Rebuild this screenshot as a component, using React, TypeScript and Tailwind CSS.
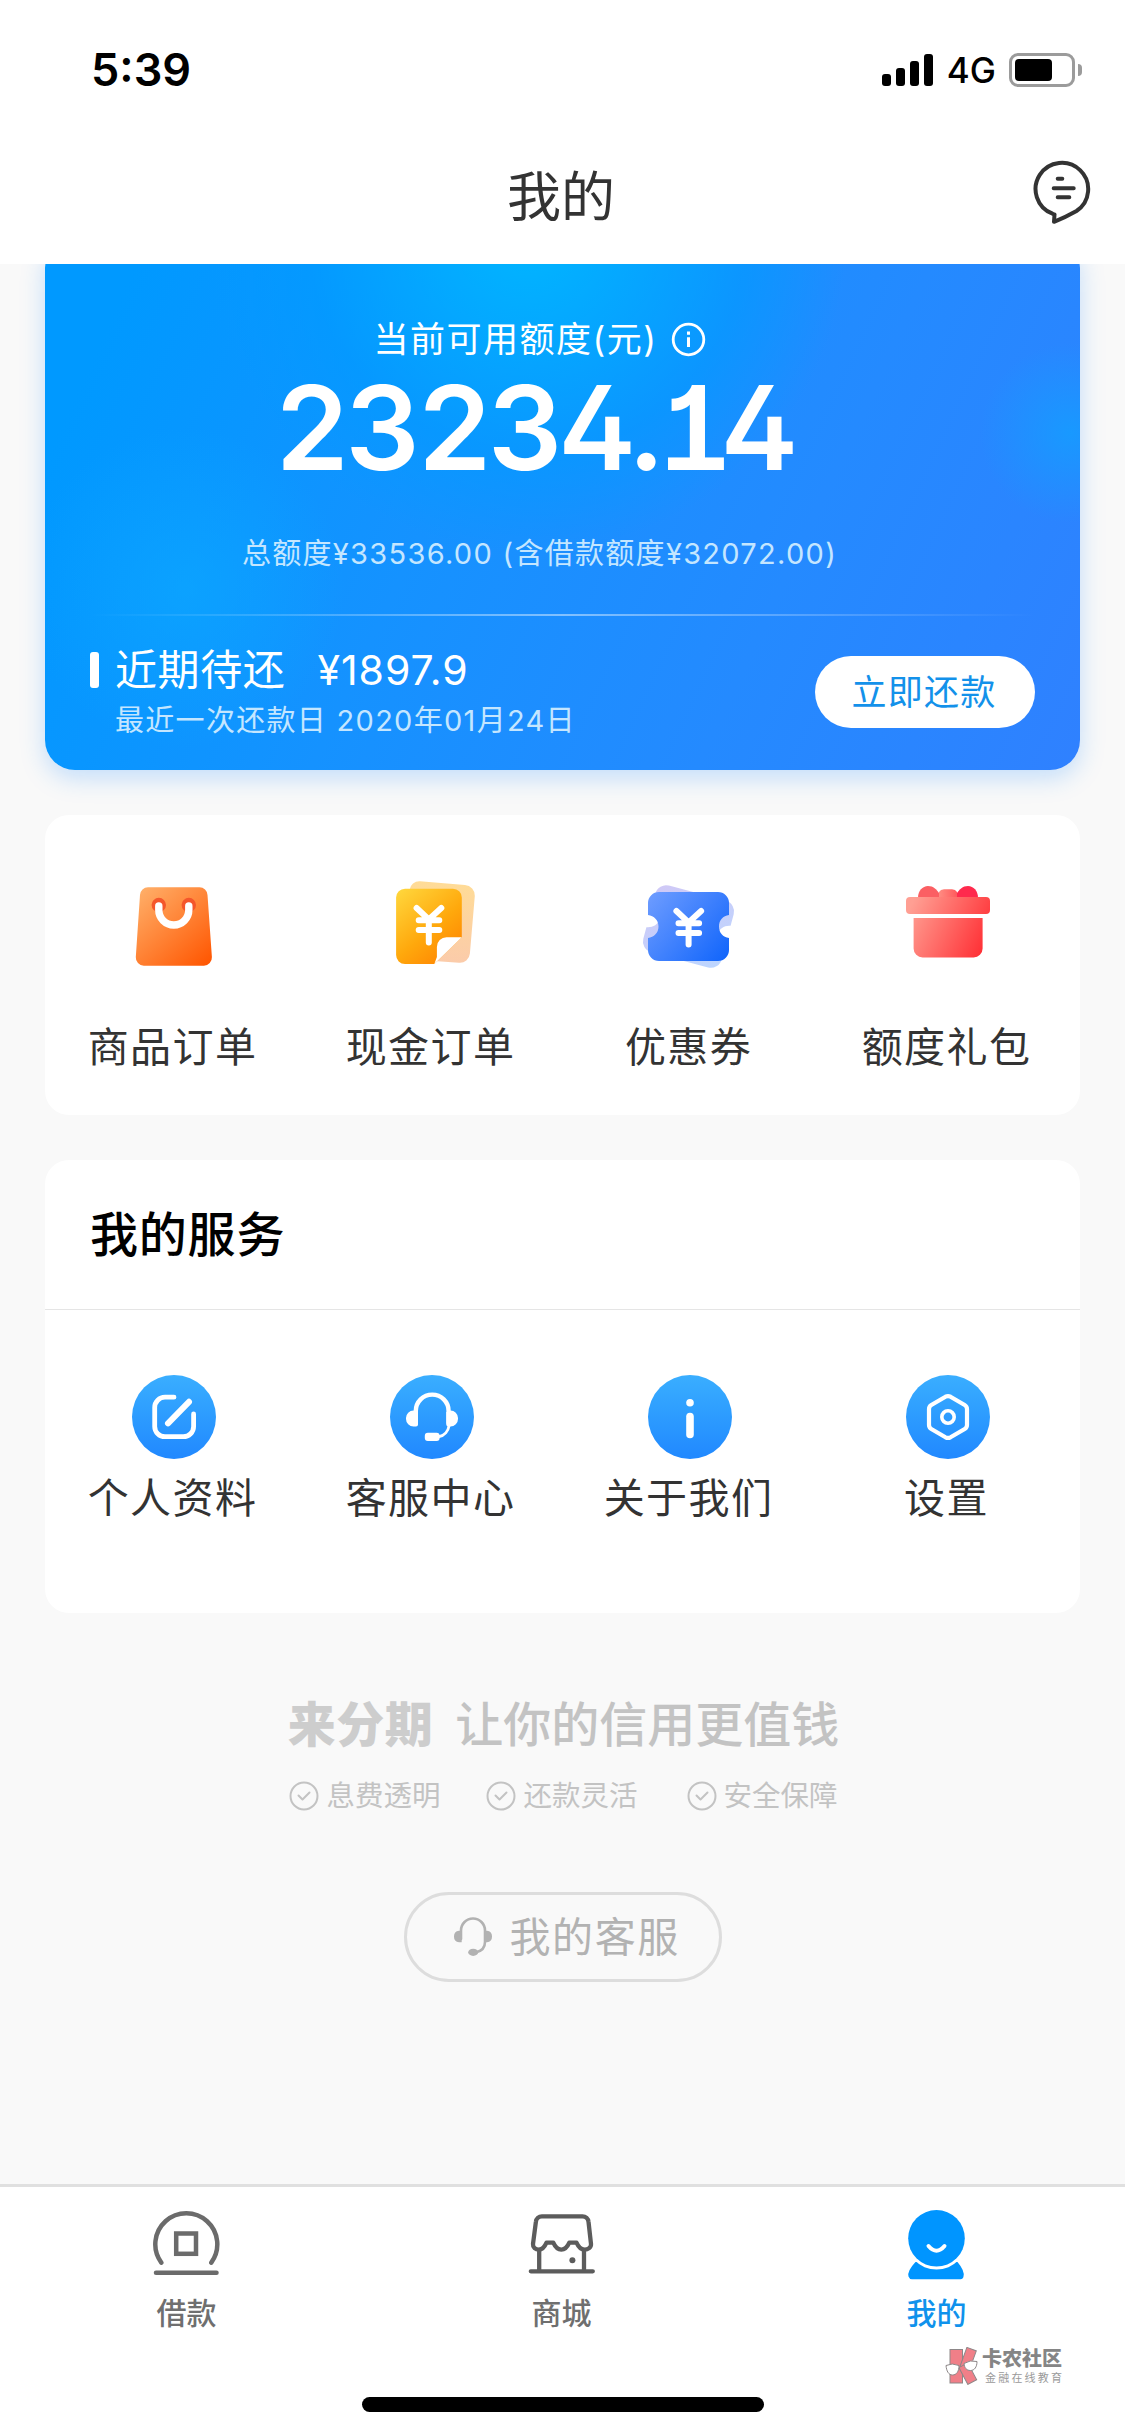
import type { ReactNode } from "react";

const FONT = "font-['Inter','Noto_Sans_CJK_SC',sans-serif]";

function StatusBar() {
	return (
		<div className="flex h-[139px] items-center justify-between pl-[91px] pr-[43px]">
			<span className="text-[45px] font-semibold leading-none text-black">5:39</span>
			<div className="flex items-center">
				<div className="flex items-end gap-[5px]">
					<span className="h-3 w-[9px] rounded-[3px] bg-black" />
					<span className="h-[18px] w-[9px] rounded-[3px] bg-black" />
					<span className="h-[25px] w-[9px] rounded-[3px] bg-black" />
					<span className="h-8 w-[9px] rounded-[3px] bg-black" />
				</div>
				<span className="ml-[14px] mt-0.5 text-[35px] font-medium leading-none text-black">4G</span>
				<div className="ml-[13px] flex h-[34px] w-[66px] items-center rounded-[9px] border-3 border-[#9b9b9b] pl-[3px]">
					<span className="h-[22px] w-[37px] rounded-[4px] bg-black" />
				</div>
				<span className="ml-[3px] h-3 w-1 rounded-r-full bg-[#9b9b9b]" />
			</div>
		</div>
	);
}

function ChatIcon() {
	return (
		<svg width="60" height="66" viewBox="0 0 60 66" fill="none" stroke="#333" strokeWidth="4" strokeLinecap="round" strokeLinejoin="round">
			<path d="M22.5 54.6 L22 61.8 Q34 57 44.5 51 A26.3 26.3 0 1 0 20.5 53.7 L22.5 54.6" />
			<path d="M25.7 18.7h4.6M21.7 28.3h20M25.7 37.3h11.6" />
		</svg>
	);
}

function QuotaCard() {
	return (
		<section className="relative mx-[45px] -mt-[26px] h-[532px] rounded-[30px] bg-[radial-gradient(circle_at_483px_-5px,#00b6ff_0px,rgba(0,170,255,0.75)_130px,rgba(0,155,255,0.6)_220px,rgba(0,155,255,0)_320px),radial-gradient(circle_at_140px_350px,rgba(12,170,255,0.6)_0px,rgba(12,170,255,0)_160px),radial-gradient(circle_at_1025px_195px,rgba(20,158,255,0.8)_0px,rgba(20,158,255,0)_90px),linear-gradient(115deg,#0099ff_8%,#1592ff_40%,#248aff_70%,#3080ff_102%)] text-white shadow-[0_8px_24px_rgba(30,140,255,0.25)]">
			<div className="flex flex-col items-center pr-[46px] pt-[76px]">
				<div className="flex h-[50px] items-center">
					<span className="text-[35px] leading-none tracking-[1.5px]">当前可用额度(元)</span>
					<svg className="ml-[13px]" width="35" height="35" viewBox="0 0 35 35" fill="none" stroke="#fff" strokeWidth="2.8">
						<circle cx="17.5" cy="17.5" r="15.3" />
						<path d="M17.5 15.3V25M17.5 9.5v3.2" strokeWidth="3" />
					</svg>
				</div>
				<div className="mr-[18px] mt-[6px] text-[117px] font-semibold leading-[116px] [font-feature-settings:'cv01','cv02','tnum']">
					<span className="tracking-[-4.5px]">23234</span>
					<span className="tracking-[-5px]">.</span>
					<span className="tracking-[-11px]">14</span>
				</div>
				<div className="mt-[48px] text-[29px] leading-10 tracking-[1.3px] text-[#c4e6ff]">
					总额度¥33536.00 (含借款额度¥32072.00)
				</div>
			</div>
			<div className="mx-[45px] mt-[40px] h-[2px] bg-linear-to-r from-white/0 via-white/45 to-white/0" />
			<div className="flex items-start justify-between px-[45px] pt-6">
				<div>
					<div className="flex h-[60px] items-center">
						<span className="h-9 w-[9px] rounded-[3px] bg-white" />
						<span className="ml-4 text-[42px] leading-none tracking-[0.6px]">近期待还</span>
						<span className="ml-8 text-[41px] leading-none tracking-[1px]">¥1897.9</span>
					</div>
					<div className="mt-1 pl-[25px] text-[29px] leading-[34px] tracking-[1.3px] text-[#c4e6ff]">
						最近一次还款日 2020年01月24日
					</div>
				</div>
				<button className="mt-4 h-[72px] w-[220px] rounded-full bg-white pr-[2px] text-[35px] leading-[70px] tracking-[1.2px] text-[#1391ea]">
					立即还款
				</button>
			</div>
		</section>
	);
}

function BagIcon() {
	return (
		<svg width="90" height="90" viewBox="0 0 90 90" fill="none">
			<defs>
				<linearGradient id="bag" x1="10" y1="8" x2="80" y2="86" gradientUnits="userSpaceOnUse">
					<stop stopColor="#ffb06a" />
					<stop offset="1" stopColor="#ff5500" />
				</linearGradient>
			</defs>
			<path d="M19 7.3H70.5a8 8 0 0 1 8 7.6L82.9 77a8.2 8.2 0 0 1-8 8.7H14.8a8.2 8.2 0 0 1-8-8.7L11 14.9a8 8 0 0 1 8-7.6z" fill="url(#bag)" />
			<circle cx="29.8" cy="25" r="7.2" fill="#f4562b" />
			<circle cx="59.8" cy="25" r="7.2" fill="#f4562b" />
			<path d="M29.8 26v4a15 15 0 0 0 30 0v-4" stroke="#fff" strokeWidth="7.4" strokeLinecap="round" />
		</svg>
	);
}

function CashIcon() {
	return (
		<svg width="90" height="90" viewBox="0 0 90 90" fill="none">
			<defs>
				<linearGradient id="cash" x1="9" y1="9" x2="72" y2="84" gradientUnits="userSpaceOnUse">
					<stop stopColor="#ffd83e" />
					<stop offset="0.55" stopColor="#ffa80c" />
					<stop offset="1" stopColor="#ff7e00" />
				</linearGradient>
				<linearGradient id="cashBack" x1="60" y1="0" x2="60" y2="84" gradientUnits="userSpaceOnUse">
					<stop stopColor="#ffdc96" />
					<stop offset="1" stopColor="#fbcbaa" />
				</linearGradient>
			</defs>
			<path d="M33 1.2 78 5a10.5 10.5 0 0 1 9.8 11L82.9 73.5a10 10 0 0 1-11 9.2L40 80.5 22.5 10a10 10 0 0 1 10.5-8.8z" fill="url(#cashBack)" />
			<path d="M18 8.7H66a8.8 8.8 0 0 1 8.8 8.8V57.3L47.3 84H18a8.9 8.9 0 0 1-8.9-8.9V17.6A8.9 8.9 0 0 1 18 8.7z" fill="url(#cash)" />
			<path d="M74.8 57.3H59.5a9.6 9.6 0 0 0-9.6 9.6V77L47.3 84z" fill="#fff" />
			<path d="m29.6 28 12.2 11.5L54.3 28M31.7 40.3h20.6M31.7 50h20.6M41.8 40v22.5" stroke="#fff" strokeWidth="6" strokeLinecap="round" />
		</svg>
	);
}

const TICKET =
	"M14 12H73a11 11 0 0 1 11 11V35C78 36 74 40 74 46.5S78 57 84 58V70a11 11 0 0 1-11 11H14A11 11 0 0 1 3 70V58C9 57 13.5 53 13.5 46.5S9 36 3 35V23A11 11 0 0 1 14 12z";

function CouponIcon() {
	return (
		<svg width="90" height="90" viewBox="0 0 90 90" fill="none" overflow="visible">
			<defs>
				<linearGradient id="coupon" x1="3" y1="12" x2="84" y2="81" gradientUnits="userSpaceOnUse">
					<stop stopColor="#6f9dff" />
					<stop offset="1" stopColor="#0f64fb" />
				</linearGradient>
				<linearGradient id="couponBack" x1="10" y1="5" x2="80" y2="85" gradientUnits="userSpaceOnUse">
					<stop stopColor="#d0c8f6" />
					<stop offset="1" stopColor="#bcd6ff" />
				</linearGradient>
			</defs>
			<path d={TICKET} fill="url(#couponBack)" transform="rotate(15 43.5 46.5)" />
			<path d={TICKET} fill="url(#coupon)" />
			<path d="M31.4 31 43.6 42.5 56.1 31M33.5 43.3h20.6M33.5 53h20.6M43.6 43v21.5" stroke="#fff" strokeWidth="6" strokeLinecap="round" />
		</svg>
	);
}

function GiftIcon() {
	return (
		<svg width="90" height="90" viewBox="0 0 90 90" fill="none">
			<defs>
				<linearGradient id="gift" x1="6" y1="30" x2="82" y2="66" gradientUnits="userSpaceOnUse">
					<stop stopColor="#ff9f93" />
					<stop offset="1" stopColor="#ff3136" />
				</linearGradient>
				<linearGradient id="giftKnot" x1="36" y1="0" x2="54" y2="0" gradientUnits="userSpaceOnUse">
					<stop stopColor="#ff8c82" />
					<stop offset="1" stopColor="#ff5a5c" />
				</linearGradient>
			</defs>
			<path d="M15 17.5C15 11 19.5 6 25 6s8.5 3.5 11 7v5z" fill="#fb5f63" />
			<path d="M75 17.5C75 11 70.5 6 65 6s-8.5 3.5-11 7v5z" fill="#ff2a4d" />
			<path d="M36 18v-6q1.5-2.7 5-2.7h8q3.5 0 5 2.7v6z" fill="url(#giftKnot)" />
			<rect x="3" y="17" width="84" height="17" rx="4" fill="url(#gift)" />
			<path d="M10.6 38h69v30.5a9 9 0 0 1-9 9h-51a9 9 0 0 1-9-9z" fill="url(#gift)" />
		</svg>
	);
}

function Disc({ children }: { children: ReactNode }) {
	return (
		<div className="flex h-[84px] w-[84px] items-center justify-center rounded-full bg-linear-to-b from-[#3aaeff] to-[#2188ff]">
			<svg width="84" height="84" viewBox="0 0 84 84" fill="none" stroke="#fff" strokeLinecap="round" strokeLinejoin="round">
				{children}
			</svg>
		</div>
	);
}

const orders = [
	{ label: "商品订单", icon: <BagIcon /> },
	{ label: "现金订单", icon: <CashIcon /> },
	{ label: "优惠券", icon: <CouponIcon /> },
	{ label: "额度礼包", icon: <GiftIcon /> },
];

const services = [
	{
		label: "个人资料",
		icon: (
			<>
				<path d="M42 22.2H33a10.3 10.3 0 0 0-10.3 10.3V51.4A10.3 10.3 0 0 0 33 61.7h18.3a10.3 10.3 0 0 0 10.3-10.3V39" strokeWidth="4.8" />
				<path d="M36 48.3 57 26.8" strokeWidth="6" />
			</>
		),
	},
	{
		label: "客服中心",
		icon: (
			<>
				<path d="M25.8 48V36a16.4 16.4 0 0 1 32.8 0V48" strokeWidth="4.4" />
				<path d="M28 37v12.5a2 2 0 0 1-2 2h-2.5a7.5 7.5 0 0 1-7.5-7.5v-1a7.5 7.5 0 0 1 7.5-7.5zM56.3 37v12.5a2 2 0 0 0 2 2h2.2A7.5 7.5 0 0 0 68 44v-1a7.5 7.5 0 0 0-7.5-7.5z" fill="#fff" stroke="none" />
				<path d="M59 51c-.8 5-4.5 9.5-10 10.7" strokeWidth="2.8" />
				<rect x="34.8" y="57.7" width="14.8" height="8.4" rx="3" fill="#fff" stroke="none" />
			</>
		),
	},
	{
		label: "关于我们",
		icon: (
			<>
				<circle cx="42" cy="27.7" r="3.8" fill="#fff" stroke="none" />
				<path d="M42 41.5v18" strokeWidth="7.6" />
			</>
		),
	},
	{
		label: "设置",
		icon: (
			<>
				<path d="M39.5 21.7q2.5-1.3 5 0L58.7 30q2.3 1.4 2.3 4v16q0 2.6-2.3 4L44.5 62.3q-2.5 1.3-5 0L25.3 54Q23 52.6 23 50V34q0-2.6 2.3-4z" strokeWidth="4.2" />
				<circle cx="42" cy="42" r="6.2" strokeWidth="3.6" />
			</>
		),
	},
];

const promises = [
	{ label: "息费透明", gap: "" },
	{ label: "还款灵活", gap: "ml-[46px]" },
	{ label: "安全保障", gap: "ml-[49px]" },
];

function LoanIcon() {
	return (
		<svg width="70" height="72" viewBox="0 0 70 72" fill="none" stroke="#6b6b6b" strokeWidth="4.5" strokeLinecap="round">
			<path d="M9.3 53.6A31 31 0 1 1 59.3 53.6" />
			<rect x="24.2" y="24.5" width="19.8" height="20.3" />
			<path d="M4 63.7h60.5" />
		</svg>
	);
}

function MallIcon() {
	return (
		<svg width="70" height="72" viewBox="0 0 70 72" fill="none" stroke="#5c5c5c" strokeWidth="4.3" strokeLinecap="round" strokeLinejoin="round">
			<path d="M15 7.3H55.5a6 6 0 0 1 6 5.5L64 35c.3 3.5-3 5.7-6.5 5.7-4 0-6-2.5-8-7h-7.2c-2 4.5-4 7-8 7s-6-2.5-8-7h-6.8c-2 4.5-4 7-7.5 7C8.500 40.700 5.700 38.500 6 35L8.900 12.800A6 6 0 0 1 15 7.300z" />
			<path d="M12.2 41v21M57 41v21M3.8 62.3h62" />
			<circle cx="45.4" cy="51.3" r="3" fill="#5c5c5c" stroke="none" />
		</svg>
	);
}

function MineIcon() {
	return (
		<svg width="70" height="72" viewBox="0 0 70 72" fill="none">
			<path d="M13.5 53 Q5 62 6.5 67.5 Q7.5 70.3 10 70.3H58.5Q61 70.3 61.5 67.5 Q63 62 55.5 53z" fill="#0095ff" />
			<circle cx="34.5" cy="29.3" r="31.2" fill="#fff" />
			<circle cx="34.5" cy="29.3" r="28.3" fill="#0095ff" />
			<path d="M26.5 37q8 9.5 16 0" stroke="#fff" strokeWidth="4" strokeLinecap="round" />
		</svg>
	);
}

const tabs = [
	{ label: "借款", icon: <LoanIcon />, color: "text-[#6f6f6f]" },
	{ label: "商城", icon: <MallIcon />, color: "text-[#6f6f6f]" },
	{ label: "我的", icon: <MineIcon />, color: "text-[#0f92ec]" },
];

export default function App() {
	return (
		<div className={`relative flex h-[2436px] w-[1125px] flex-col overflow-hidden bg-[#f9f9f9] ${FONT}`}>
			<header className="relative z-10 h-[264px] bg-white">
				<StatusBar />
				<div className="grid h-[125px] grid-cols-[1fr_auto_1fr] items-center pb-[7px] pr-[33px]">
					<span />
					<h1 className="ml-[30px] text-[54px] leading-none text-[#333]">我的</h1>
					<div className="mb-[11px] justify-self-end">
						<ChatIcon />
					</div>
				</div>
			</header>

			<main className="flex-1">
				<QuotaCard />

				<section className="mx-[45px] mt-[45px] h-[300px] rounded-[24px] bg-white pt-[65px]">
					<div className="grid w-[1032px] grid-cols-4">
						{orders.map((item) => (
							<div key={item.label} className="flex flex-col items-center">
								{item.icon}
								<span className="mt-[47px] pr-[3px] text-[41px] leading-[60px] tracking-[1.4px] text-[#333]">{item.label}</span>
							</div>
						))}
					</div>
				</section>

				<section className="mx-[45px] mt-[45px] h-[453px] rounded-[24px] bg-white">
					<h2 className="h-[150px] border-b border-[#e5e5e5] pl-[45px] text-[48px] font-medium leading-[149px] tracking-[0.8px] text-black">
						我的服务
					</h2>
					<div className="grid w-[1032px] grid-cols-4 pt-[65px]">
						{services.map((item) => (
							<div key={item.label} className="flex flex-col items-center">
								<Disc>{item.icon}</Disc>
								<span className="mt-[9px] pr-[3px] text-[41px] leading-[60px] tracking-[1.4px] text-[#333]">{item.label}</span>
							</div>
						))}
					</div>
				</section>

				<div className="mt-[82px] flex h-[60px] items-center justify-center pl-[2px]">
					<span className="text-[48px] font-black leading-none tracking-[0.5px] text-[#cdcdcd]">来分期</span>
					<span className="ml-[22px] text-[48px] font-medium leading-none text-[#c3c3c3]">让你的信用更值钱</span>
				</div>
				<div className="mt-[21px] flex h-10 items-center justify-center pl-[2px] text-[#c3c3c3]">
					{promises.map((item) => (
						<div key={item.label} className={`flex items-center ${item.gap}`}>
							<svg width="30" height="30" viewBox="0 0 30 30" fill="none" stroke="currentColor" strokeWidth="2">
								<circle cx="15" cy="15" r="13.5" />
								<path d="m9.5 14.5 4 4 7-7" strokeLinecap="round" strokeLinejoin="round" />
							</svg>
							<span className="ml-[7px] text-[28.5px] leading-none">{item.label}</span>
						</div>
					))}
				</div>
				<button className="mx-auto mt-[76px] flex h-[90px] w-[318px] items-center rounded-full border-3 border-[#ddd] pl-[45px] text-[#b2b2b2]">
					<svg width="42" height="42" viewBox="0 0 42 42" fill="none" stroke="currentColor" strokeLinecap="round">
						<path d="M9 23V14.5a12 12 0 0 1 24 0V26c0 5-3 9-9 10.3" strokeWidth="2.6" />
						<path d="M9.7 14.8v11.5H7A5.8 5.8 0 0 1 7 14.8zM32.3 14.8v11.5H35a5.8 5.8 0 0 0 0-11.5z" fill="currentColor" stroke="none" />
						<ellipse cx="21.2" cy="36.3" rx="5" ry="3.6" fill="currentColor" stroke="none" />
					</svg>
					<span className="ml-4 text-[41px] leading-none tracking-[1.6px]">我的客服</span>
				</button>
			</main>

			<footer className="h-[252px] border-t-3 border-[#e0e0e0] bg-white">
				<nav className="grid h-[210px] grid-cols-3 pt-[22px]">
					{tabs.map((tab) => (
						<div key={tab.label} className={`mr-[2px] flex flex-col items-center ${tab.color}`}>
							{tab.icon}
							<span className="mt-3 text-[30px] font-medium leading-10">{tab.label}</span>
						</div>
					))}
				</nav>
				<div className="mx-auto h-[15px] w-[402px] rounded-full bg-black" />
			</footer>

			{/* Community badge floating over the tab bar */}
			<div className="absolute left-[944px] top-[2347px] z-20 flex items-start">
				<svg width="36" height="38" viewBox="0 0 36 38" fill="#f07f88" stroke="#8d8788" strokeWidth="1">
					<rect x="6" y="2.5" width="12.5" height="33.5" />
					<rect x="19" y="1.5" width="10" height="20" transform="rotate(20 24 12)" />
					<rect x="18.5" y="17" width="10" height="19" transform="rotate(-28 24 26)" />
					<path d="M2 18.5q6-3 13 0c0 6-2.5 9.5-6.5 9.5S2.5 24 2 18.5zM20 16.5q6-4 13-2c0 5.5-2.5 9-6.5 9s-6-2.5-6.5-7z" fill="#fff" />
				</svg>
				<div className="ml-0.5 flex flex-col">
					<span className="text-[20px] font-black leading-6 text-[#858585]">卡农社区</span>
					<span className="ml-[3px] text-[11px] leading-[14px] tracking-[2.2px] text-[#9a9a9a]">金融在线教育</span>
				</div>
			</div>
		</div>
	);
}
